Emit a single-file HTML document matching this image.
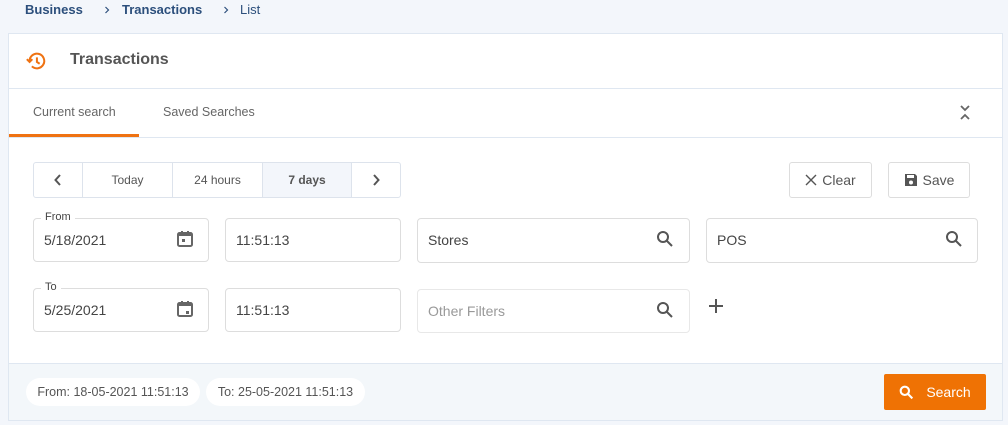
<!DOCTYPE html>
<html><head><meta charset="utf-8"><style>
*{box-sizing:border-box;margin:0;padding:0}
body{width:1008px;height:425px;background:#f3f6fb;font-family:"Liberation Sans",sans-serif;position:relative;overflow:hidden;color:#555}
.a{position:absolute}
.bc{top:2px;font-size:13px;color:#2c4f7c;font-weight:bold}
.card{left:8px;top:33px;width:995px;height:388px;background:#fff;border:1px solid #dfe7f1}
.box{border:1px solid #ddd;border-radius:4px;background:#fff;font-size:14px;color:#444}
.box span{position:absolute;left:10px;top:13px}
.lbl{position:absolute;top:-8px;left:7px;background:#fff;padding:0 4px;font-size:11px;color:#444}
.seg{top:162px;left:33px;width:368px;height:36px;border:1px solid #dde3ec;border-radius:3px;display:flex;font-size:12px;color:#555}
.seg div{display:flex;align-items:center;justify-content:center;border-right:1px solid #dde3ec}
.btn{border:1px solid #ddd;border-radius:3px;font-size:14px;color:#555;display:flex;align-items:center;justify-content:center;gap:5px;background:#fff}
.chip{top:378px;height:28px;border-radius:14px;background:#fff;font-size:12.5px;color:#555;display:flex;align-items:center;justify-content:center}
</style></head><body>
<div class="a bc" style="left:25px">Business</div>
<svg class="a" style="left:104px;top:6px" width="6" height="8" viewBox="0 0 6 8" fill="none" stroke="#2c4f7c" stroke-width="1.2"><path d="M1.5 1l3 3-3 3"/></svg>
<div class="a bc" style="left:122px">Transactions</div>
<svg class="a" style="left:223px;top:6px" width="6" height="8" viewBox="0 0 6 8" fill="none" stroke="#2c4f7c" stroke-width="1.2"><path d="M1.5 1l3 3-3 3"/></svg>
<div class="a bc" style="left:240px;font-weight:normal">List</div>
<div class="a card"></div>
<svg class="a" style="left:25px;top:50px" width="22" height="22" viewBox="0 0 24 24" fill="none" stroke="#ef7212" stroke-width="2.2"><path d="M5 12a8 8 0 1 1 2.5 5.8"/><path d="M2 10l3 3 3-3" /><path d="M13 8v5l3 2"/></svg>
<div class="a" style="left:70px;top:51px;font-size:16px;font-weight:bold;color:#555">Transactions</div>
<div class="a" style="left:9px;top:88px;width:993px;height:1px;background:#dfe7f1"></div>
<div class="a" style="left:33px;top:105px;font-size:12.5px;color:#666">Current search</div>
<div class="a" style="left:163px;top:105px;font-size:12.5px;color:#666">Saved Searches</div>
<div class="a" style="left:9px;top:134px;width:130px;height:3px;background:#ef7212"></div>
<div class="a" style="left:9px;top:137px;width:993px;height:1px;background:#dfe7f1"></div>
<svg class="a" style="left:958px;top:104px" width="14" height="18" viewBox="0 0 14 18" fill="none" stroke="#666" stroke-width="1.8"><path d="M3 2l4 4 4-4M3 15l4-4 4 4"/></svg>
<div class="a seg"><div style="width:49px"><svg width="10" height="12" viewBox="0 0 10 12" fill="none" stroke="#555" stroke-width="2"><path d="M7 1L2.5 6 7 11"/></svg></div><div style="width:90px">Today</div><div style="width:90px">24 hours</div><div style="width:89px;background:#f3f6fb;font-weight:bold">7 days</div><div style="width:48px;border:none"><svg width="10" height="12" viewBox="0 0 10 12" fill="none" stroke="#555" stroke-width="2"><path d="M3 1l4.5 5L3 11"/></svg></div></div>
<div class="a btn" style="left:789px;top:162px;width:83px;height:36px"><svg width="12" height="12" viewBox="0 0 12 12" stroke="#555" stroke-width="1.4"><path d="M1 1l10 10M11 1L1 11"/></svg>Clear</div>
<div class="a btn" style="left:888px;top:162px;width:82px;height:36px"><svg width="14" height="14" viewBox="0 0 14 14"><path d="M1 1h10l2 2v10H1z" fill="#555"/><rect x="3" y="2" width="7" height="3" fill="#fff"/><circle cx="7" cy="9.5" r="2" fill="#fff"/></svg>Save</div>
<div class="a box" style="left:33px;top:218px;width:176px;height:44px"><div class="lbl">From</div><span>5/18/2021</span></div>
<div class="a box" style="left:33px;top:288px;width:176px;height:44px"><div class="lbl">To</div><span>5/25/2021</span></div>
<svg class="a" style="left:176px;top:230px" width="18" height="18" viewBox="0 0 18 18"><rect x="2" y="3" width="14" height="13" rx="1.5" fill="none" stroke="#666" stroke-width="2"/><rect x="2" y="3" width="14" height="3" fill="#666"/><rect x="5" y="1" width="2" height="3" fill="#666"/><rect x="11" y="1" width="2" height="3" fill="#666"/><rect x="6" y="9" width="3" height="3" fill="#666"/></svg>
<svg class="a" style="left:176px;top:300px" width="18" height="18" viewBox="0 0 18 18"><rect x="2" y="3" width="14" height="13" rx="1.5" fill="none" stroke="#666" stroke-width="2"/><rect x="2" y="3" width="14" height="3" fill="#666"/><rect x="5" y="1" width="2" height="3" fill="#666"/><rect x="11" y="1" width="2" height="3" fill="#666"/><rect x="10" y="11" width="3" height="3" fill="#666"/></svg>
<div class="a box" style="left:225px;top:218px;width:176px;height:44px"><span>11:51:13</span></div>
<div class="a box" style="left:225px;top:288px;width:176px;height:44px"><span>11:51:13</span></div>
<div class="a box" style="left:417px;top:218px;width:273px;height:45px"><span>Stores</span></div>
<div class="a box" style="left:706px;top:218px;width:272px;height:45px"><span>POS</span></div>
<div class="a box" style="left:417px;top:289px;width:273px;height:44px;border-color:#e8e8e8"><span style="color:#999">Other Filters</span></div>
<svg class="a" style="left:656px;top:230px" width="18" height="18" viewBox="0 0 18 18" fill="none" stroke="#555" stroke-width="2"><circle cx="7" cy="7" r="5"/><path d="M11 11l5 5"/></svg>
<svg class="a" style="left:945px;top:230px" width="18" height="18" viewBox="0 0 18 18" fill="none" stroke="#555" stroke-width="2"><circle cx="7" cy="7" r="5"/><path d="M11 11l5 5"/></svg>
<svg class="a" style="left:656px;top:301px" width="18" height="18" viewBox="0 0 18 18" fill="none" stroke="#555" stroke-width="2"><circle cx="7" cy="7" r="5"/><path d="M11 11l5 5"/></svg>
<svg class="a" style="left:708px;top:298px" width="16" height="16" viewBox="0 0 16 16" stroke="#555" stroke-width="2"><path d="M8 1v14M1 8h14"/></svg>
<div class="a" style="left:9px;top:363px;width:993px;height:57px;background:#f3f7fa;border-top:1px solid #dfe7f1"></div>
<div class="a chip" style="left:26px;width:174px">From: 18-05-2021 11:51:13</div>
<div class="a chip" style="left:206px;width:159px">To: 25-05-2021 11:51:13</div>
<div class="a" style="left:884px;top:374px;width:102px;height:36px;background:#ef7204;border-radius:2px;color:#fff;font-size:14px;display:flex;align-items:center;justify-content:center;gap:12px"><svg width="15" height="15" viewBox="0 0 18 18" fill="none" stroke="#fff" stroke-width="2.5"><circle cx="7" cy="7" r="5"/><path d="M11 11l5 5"/></svg>Search</div>
</body></html>
